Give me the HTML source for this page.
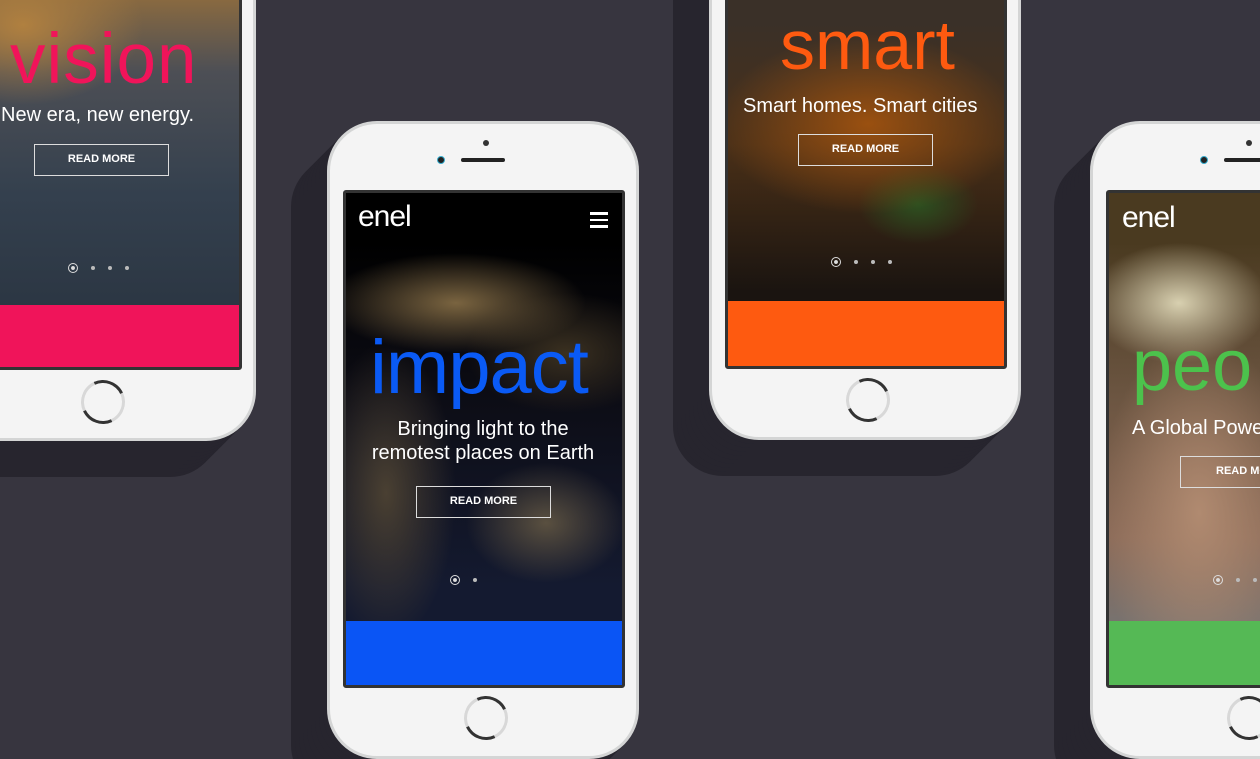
<!DOCTYPE html>
<html><head><meta charset="utf-8"><style>
*{margin:0;padding:0;box-sizing:border-box}
body{width:1260px;height:720px;overflow:hidden;background:#37353f;position:relative;font-family:"Liberation Sans",sans-serif}
.ph{position:absolute;width:312px;height:638px;border-radius:50px;background:#f4f4f4;border:3px solid #d4d5d5;
box-shadow:-4px 4px 0 #27252e,-8px 8px 0 #27252e,-12px 12px 0 #27252e,-16px 16px 0 #27252e,-20px 20px 0 #27252e,-24px 24px 0 #27252e,-28px 28px 0 #27252e,-32px 32px 0 #27252e,-36px 36px 0 #27252e}
.scr{position:absolute;left:13px;top:66px;width:282px;height:498px;border:3px solid #333;border-radius:3px;overflow:hidden}
.bar{position:absolute;left:0;right:0;bottom:0;height:64px}
.home{position:absolute;left:134px;top:586px;width:44px;height:44px;border-radius:50%;border:3px solid #d8d8d8;border-top-color:#333;border-bottom-color:#333;transform:rotate(20deg)}
.cam{position:absolute;left:107px;top:32px;width:8px;height:8px;border-radius:50%;background:#222;border:1px solid #3ac}
.spk{position:absolute;left:131px;top:34px;width:44px;height:4px;border-radius:2px;background:#222}
.dot{position:absolute;left:153px;top:16px;width:6px;height:6px;border-radius:50%;background:#333}
.t{position:absolute;color:#fff;white-space:nowrap}
.big{position:absolute;white-space:nowrap;letter-spacing:0px;line-height:1}
.btn{position:absolute;width:135px;height:32px;border:1.5px solid #ddd;color:#fff;font-size:11px;font-weight:bold;text-align:center;line-height:29px}
.dots{position:absolute;display:flex;gap:13px;align-items:center}
.dots i{display:block;width:4px;height:4px;border-radius:50%;background:#bbb}
.dots i:first-child{width:10px;height:10px;border:1.5px solid #ddd;background:radial-gradient(#ddd 30%,transparent 40%)}
.logo{position:absolute;color:#fff;font-size:30px;letter-spacing:-1px}
</style></head><body>

<!-- phone 1 -->
<div class="ph" style="left:-56px;top:-197px">
 <div class="scr" style="background:radial-gradient(ellipse 120px 80px at 60px 150px,#b08040,transparent),linear-gradient(180deg,#8a6a40 25%,#4d4f55 40%,#34404e 65%,#27313d 100%)">
  <div class="bar" style="background:#f0145a;height:62px"></div>
 </div>
 <div class="home" style="top:574px"></div>
</div>
<div class="big" style="left:10px;top:24px;font-size:71px;color:#f0145a;letter-spacing:1px">vision</div>
<div class="t" style="left:1px;top:104px;font-size:20px">New era, new energy.</div>
<div class="btn" style="left:34px;top:144px">READ MORE</div>
<div class="dots" style="left:68px;top:263px"><i></i><i></i><i></i><i></i></div>

<!-- phone 2 -->
<div class="ph" style="left:327px;top:121px">
 <div class="dot"></div><div class="cam"></div><div class="spk"></div>
 <div class="scr" style="background:radial-gradient(ellipse 130px 50px at 110px 110px,#7a6440,transparent),radial-gradient(ellipse 70px 150px at 40px 300px,#4a4032,transparent),radial-gradient(ellipse 100px 60px at 220px 160px,#3a3020,transparent),radial-gradient(ellipse 80px 60px at 200px 330px,#5a5040,transparent),linear-gradient(180deg,#000 10%,#0c0c14 40%,#141a30 80%)">
  <div class="bar" style="background:#0a55f5;height:64px"></div>
 </div>
 <div class="home" style="top:572px"></div>
</div>
<div class="logo" style="left:358px;top:200px">enel</div>
<div style="position:absolute;left:590px;top:212px;width:18px">
 <div style="height:2.5px;background:#fff;margin-bottom:4px"></div><div style="height:2.5px;background:#fff;margin-bottom:4px"></div><div style="height:2.5px;background:#fff"></div></div>
<div class="big" style="left:370px;top:330px;font-size:76px;color:#0a5af5;letter-spacing:-1px">impact</div>
<div class="t" style="left:343px;width:280px;text-align:center;top:417px;font-size:20px;line-height:24px;white-space:normal">Bringing light to the<br>remotest places on Earth</div>
<div class="btn" style="left:416px;top:486px">READ MORE</div>
<div class="dots" style="left:450px;top:575px"><i></i><i></i></div>

<!-- phone 3 -->
<div class="ph" style="left:709px;top:-198px">
 <div class="scr" style="background:radial-gradient(ellipse 150px 90px at 140px 250px,#9a5010,transparent),radial-gradient(ellipse 60px 40px at 190px 330px,#2c5020,transparent),linear-gradient(180deg,#3a3028 30%,#4a3018 55%,#1a1410 85%)">
  <div class="bar" style="background:#fe5a10;height:65px"></div>
 </div>
 <div class="home" style="top:573px"></div>
</div>
<div class="big" style="left:780px;top:10px;font-size:70px;color:#fe5a10">smart</div>
<div class="t" style="left:743px;top:95px;font-size:20px">Smart homes. Smart cities</div>
<div class="btn" style="left:798px;top:134px">READ MORE</div>
<div class="dots" style="left:831px;top:257px"><i></i><i></i><i></i><i></i></div>

<!-- phone 4 -->
<div class="ph" style="left:1090px;top:121px">
 <div class="dot"></div><div class="cam"></div><div class="spk"></div>
 <div class="scr" style="background:radial-gradient(ellipse 90px 60px at 70px 110px,#d8d0b0,transparent),radial-gradient(ellipse 100px 180px at 90px 320px,#b08a70,transparent),linear-gradient(180deg,#4a3a20 10%,#6a5440 40%,#8a6a58 70%,#6a7880 100%)">
  <div class="bar" style="background:#55b955;height:64px"></div>
 </div>
 <div class="home" style="top:572px"></div>
</div>
<div class="logo" style="left:1122px;top:201px">enel</div>
<div class="big" style="left:1132px;top:330px;font-size:72px;color:#4cc24c">peo</div>
<div class="t" style="left:1132px;top:417px;font-size:20px">A Global Powe</div>
<div class="btn" style="left:1180px;top:456px;text-align:left;padding-left:35px">READ MORE</div>
<div class="dots" style="left:1213px;top:575px"><i></i><i></i><i></i></div>

</body></html>
